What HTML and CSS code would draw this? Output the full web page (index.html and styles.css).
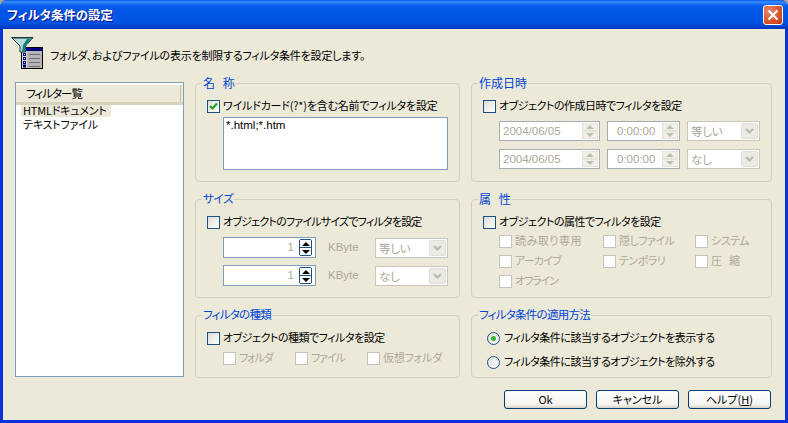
FILE: index.html
```html
<!DOCTYPE html>
<html lang="ja">
<head>
<meta charset="utf-8">
<title>フィルタ条件の設定</title>
<link rel="stylesheet" href="styles.css">
</head>
<body>
<div class="window">
  <header class="titlebar">
    <span class="title">フィルタ条件の設定</span>
    <button class="close" aria-label="閉じる"><svg width="12" height="12" viewBox="0 0 12 12"><path d="M1.500 1.500l9 9M10.500 1.500l-9 9" stroke="#fff" stroke-width="2.200" fill="none"/></svg></button>
  </header>
  <div class="client">
    <div class="intro">
      <svg class="intro-icon" width="33" height="34" viewBox="0 0 33 34">
        <rect x="10.500" y="11.500" width="21" height="21" fill="#b5b5b5" stroke="#000"/>
        <rect x="11" y="12" width="20" height="3" fill="#000080"/>
        <rect x="11" y="15" width="5" height="17" fill="#d8d8d8"/>
        <g fill="#fff" stroke="#000080"><rect x="12.500" y="17.500" width="2" height="2"/><rect x="12.500" y="21.500" width="2" height="2"/><rect x="12.500" y="25.500" width="2" height="2"/><rect x="12.500" y="29" width="2" height="2"/></g>
        <g stroke="#6e6e6e"><path d="M18 18.500h11M18 22.500h11M18 26.500h11M18 30.500h11"/></g>
        <path d="M0.500 1.500L22 1.500L14.500 10L14.500 16L9 16L9 10Z" fill="#b6dcdc" stroke="#20403f"/>
        <path d="M1 1h21v1.500H1z" fill="#1a3a3a"/>
        <path d="M12 9L16 3L20 3L14.500 10L14.500 16L11 16Z" fill="#0e8080"/>
      </svg>
      <span class="intro-text">フォルダ、およびファイルの表示を制限するフィルタ条件を設定します。</span>
    </div>
    <div class="panes">
      <aside class="list">
        <div class="list-head"><span class="list-head-cell">フィルター覧</span></div>
        <div class="list-row selected"><span>HTMLドキュメント</span></div>
        <div class="list-row"><span>テキストファイル</span></div>
      </aside>

      <section class="group">
        <h2 class="legend wide">名 称</h2>
        <label class="check on"><i class="box"><svg width="11" height="11" viewBox="0 0 11 11"><path d="M2 5l2.500 2.500L9 2.500" stroke="#21a121" stroke-width="2.200" fill="none"/></svg></i><span>ワイルドカード(?*)を含む名前でフィルタを設定</span></label>
        <div class="pattern">*.html;*.htm</div>
      </section>

      <section class="group">
        <h2 class="legend kanji">作成日時</h2>
        <label class="check"><i class="box"></i><span class="tight">オブジェクトの作成日時でフィルタを設定</span></label>
        <div class="date-row">
          <div class="field date">2004/06/05<span class="spin gray"><b class="up"></b><b class="down"></b></span></div>
          <div class="field time">0:00:00<span class="spin gray"><b class="up"></b><b class="down"></b></span></div>
          <div class="combo"><span>等しい</span><b class="drop"><svg width="9" height="6" viewBox="0 0 9 6"><path d="M1 1l3.500 3.500L8 1" stroke="#b8b8ac" stroke-width="2" fill="none"/></svg></b></div>
        </div>
        <div class="date-row">
          <div class="field date">2004/06/05<span class="spin gray"><b class="up"></b><b class="down"></b></span></div>
          <div class="field time">0:00:00<span class="spin gray"><b class="up"></b><b class="down"></b></span></div>
          <div class="combo"><span>なし</span><b class="drop"><svg width="9" height="6" viewBox="0 0 9 6"><path d="M1 1l3.500 3.500L8 1" stroke="#b8b8ac" stroke-width="2" fill="none"/></svg></b></div>
        </div>
      </section>

      <section class="group">
        <h2 class="legend">サイズ</h2>
        <label class="check"><i class="box"></i><span class="tighter">オブジェクトのファイルサイズでフィルタを設定</span></label>
        <div class="size-row">
          <div class="field size">1<span class="spin dark"><b class="up"></b><b class="down"></b></span></div>
          <span class="unit">KByte</span>
          <div class="combo"><span>等しい</span><b class="drop"><svg width="9" height="6" viewBox="0 0 9 6"><path d="M1 1l3.500 3.500L8 1" stroke="#b8b8ac" stroke-width="2" fill="none"/></svg></b></div>
        </div>
        <div class="size-row">
          <div class="field size">1<span class="spin dark"><b class="up"></b><b class="down"></b></span></div>
          <span class="unit">KByte</span>
          <div class="combo"><span>なし</span><b class="drop"><svg width="9" height="6" viewBox="0 0 9 6"><path d="M1 1l3.500 3.500L8 1" stroke="#b8b8ac" stroke-width="2" fill="none"/></svg></b></div>
        </div>
      </section>

      <section class="group">
        <h2 class="legend wide">属 性</h2>
        <label class="check"><i class="box"></i><span class="tight">オブジェクトの属性でフィルタを設定</span></label>
        <div class="attrs">
          <label class="check off"><i class="box"></i><span class="roomy">読み取り専用</span></label>
          <label class="check off"><i class="box"></i><span class="tight">隠しファイル</span></label>
          <label class="check off"><i class="box"></i><span class="tight">システム</span></label>
          <label class="check off"><i class="box"></i><span class="tighter">アーカイブ</span></label>
          <label class="check off"><i class="box"></i><span class="tight">テンポラリ</span></label>
          <label class="check off wide-text"><i class="box"></i><span>圧 縮</span></label>
          <label class="check off"><i class="box"></i><span class="tightest">オフライン</span></label>
        </div>
      </section>

      <section class="group">
        <h2 class="legend tighter">フィルタの種類</h2>
        <label class="check"><i class="box"></i><span class="tight">オブジェクトの種類でフィルタを設定</span></label>
        <div class="kinds">
          <label class="check off"><i class="box"></i><span class="tightest">フォルダ</span></label>
          <label class="check off"><i class="box"></i><span class="tightest">ファイル</span></label>
          <label class="check off"><i class="box"></i><span>仮想フォルダ</span></label>
        </div>
      </section>

      <section class="group">
        <h2 class="legend tighter">フィルタ条件の適用方法</h2>
        <label class="radio selected"><i class="dot"></i><span class="tight">フィルタ条件に該当するオブジェクトを表示する</span></label>
        <label class="radio"><i class="dot"></i><span class="tight">フィルタ条件に該当するオブジェクトを除外する</span></label>
      </section>
    </div>
    <div class="actions">
      <button class="btn">Ok</button>
      <button class="btn">キャンセル</button>
      <button class="btn">ヘルプ(<u>H</u>)</button>
    </div>
  </div>
</div>
</body>
</html>
```
FILE: styles.css
```css
* { box-sizing: border-box; }
html, body { margin: 0; padding: 0; background: #a8a89c; }
body {
  width: 788px; height: 423px; overflow: hidden;
  font-family: "Noto Sans CJK JP", "Liberation Sans", sans-serif;
  font-size: 11px; line-height: 13px; letter-spacing: -0.2px; color: #000;
  font-feature-settings: "palt";
}
.window {
  width: 788px; height: 423px; display: flex; flex-direction: column;
  border-radius: 7px 7px 0 0; overflow: hidden;
  background: #0831d9;
}
.titlebar {
  height: 29px; flex: none; display: flex; align-items: center; justify-content: space-between;
  padding: 1px 5px 0 7px;
  background: linear-gradient(#0a5ae6 0, #3b8cff 2px, #0e63ee 5px, #0058e6 9px, #0055e5 18px, #0054e3 23px, #0046d0 26px, #0033bb 29px);
}
.title { color: #fff; font-weight: 700; font-size: 12.4px; letter-spacing: 0; text-shadow: 1px 1px 0 #0f1089; }
.close {
  width: 20px; height: 20px; padding: 0; display: flex; align-items: center; justify-content: center;
  border: 1px solid #fff; border-radius: 3px;
  background: radial-gradient(circle at 30% 30%, #e88a6e, #d9502a 60%, #c23a14);
}
.client {
  flex: 1; margin: 0 3px 3px; background: #ece9d8; display: flex; flex-direction: column;
}
.intro { height: 54px; flex: none; display: flex; align-items: flex-start; padding: 7px 0 0 8px; }
.intro-icon { flex: none; }
.intro-text { margin: 13px 0 0 6px; }
.panes {
  display: grid; grid-template-columns: 169px 265px 301px; grid-template-rows: 99px 99px 63px;
  column-gap: 11px; row-gap: 17px; padding-left: 12px;
}
.list {
  grid-row: 1 / 4; margin: -1px 0 1px; background: #fff; border: 1px solid #7f9db9; padding: 2px 0 0;
}
.list-head {
  height: 20px; background: #ece9d8; border-bottom: 3px solid #d6d2bd; padding-right: 2px;
}
.list-head-cell {
  display: block; height: 17px; padding: 2px 0 0 10px; border-right: 1px solid #c4c1ae; font-size: 11.5px; letter-spacing: -1px;
}
.list-row { height: 14px; line-height: 11px; padding-left: 5px; white-space: nowrap; }
.list-row span { display: block; padding: 0 2px; width: 90px; height: 12px; }
.list-row.selected span { background: #ece9d8; }
.group { position: relative; border: 1px solid #d0d0bf; border-radius: 4px; padding: 16px 11px 0; }
.legend {
  position: absolute; top: -8px; left: 6px; margin: 0; padding: 0 1px; white-space: nowrap;
  background: #ece9d8; color: #0046d5; font: inherit; font-size: 11.5px; letter-spacing: -0.3px; font-weight: 400;
}
.legend.kanji { font-size: 12px; letter-spacing: 0; }
.legend.wide { font-size: 12px; letter-spacing: 0; word-spacing: 5px; }
.legend.tighter { letter-spacing: -0.75px; }
.check, .radio { display: flex; align-items: flex-start; height: 14px; white-space: nowrap; }
.check > span, .radio > span { margin-top: -1px; }
.check > .roomy { letter-spacing: 0.5px; }
.check > .tight, .radio > .tight { letter-spacing: -0.5px; }
.check > .tighter { letter-spacing: -0.8px; }
.check > .tightest { letter-spacing: -1.1px; }
.box {
  flex: none; width: 13px; height: 13px; margin-right: 3px; border: 1px solid #1c5180;
  background: linear-gradient(135deg, #dcdcd7, #fff); display: flex; align-items: center; justify-content: center;
}
.check.off { color: #aca899; }
.check.off .box { border-color: #c5c4bb; background: #fff; }
.wide-text { word-spacing: 5px; }
.pattern {
  width: 225px; height: 53px; margin: 3px 0 0 16px; padding: 1px 2px; background: #fff; border: 1px solid #7f9db9;
  font-family: "Liberation Sans", sans-serif; font-size: 11.5px; letter-spacing: 0;
}
.date-row, .size-row { display: flex; }
.date-row { margin: 7px 0 0 16px; gap: 7px; }
.date-row + .date-row { margin-top: 8px; }
.size-row { margin: 7px 0 0 16px; align-items: center; height: 21px; }
.size-row + .size-row { margin-top: 7px; }
.field {
  position: relative; height: 20px; background: #fff; border: 1px solid #a5acb2; color: #aca899;
  font-family: "Liberation Sans", sans-serif; font-size: 11.5px; letter-spacing: 0; line-height: 18px;
}
.field.date { width: 101px; padding-left: 3px; }
.field.time { width: 73px; padding-left: 9px; }
.field.size { width: 93px; height: 21px; border-color: #7f9db9; text-align: right; padding-right: 21px; line-height: 19px; }
.spin { position: absolute; top: 1px; right: 1px; bottom: 1px; width: 16px; display: flex; flex-direction: column; }
.spin b { flex: 1; display: flex; align-items: center; justify-content: center; }
.spin b::after { content: ""; border-left: 4px solid transparent; border-right: 4px solid transparent; }
.spin .up::after { border-bottom: 4px solid; }
.spin .down::after { border-top: 4px solid; }
.spin.gray b { background: #f1f0e8; border: 1px solid #e6e4d8; color: #bdbdb2; }
.spin.dark { width: 13px; right: 3px; border: 1px solid #1c5180; border-radius: 2px; }
.spin.dark b { background: #fff; color: #000; }
.spin.dark .up { border-bottom: 1px solid #1c5180; }
.combo {
  width: 73px; height: 20px; display: flex; border: 1px solid #c9c7ba; background: #fff; padding: 1px; color: #aca899; line-height: 16px; font-size: 11.5px;
}
.combo span { flex: 1; padding-left: 2px; }
.drop { width: 17px; background: #ecebe3; border: 1px solid #e0dfd5; border-radius: 2px; display: flex; align-items: center; justify-content: center; }
.unit { margin: 0 15px 0 12px; color: #aca899; font-family: "Liberation Sans", sans-serif; font-size: 11.5px; letter-spacing: 0; width: 32px; }
.attrs { display: grid; grid-template-columns: 104px 92px auto; row-gap: 6px; margin: 5px 0 0 16px; }
.kinds { display: grid; grid-template-columns: 72px 72px auto; margin: 6px 0 0 16px; }
.radio { margin-left: 4px; }
.radio + .radio { margin-top: 10px; }
.dot {
  flex: none; width: 13px; height: 13px; margin-right: 4px; border-radius: 50%; border: 1px solid #1c5180;
  background: linear-gradient(135deg, #dcdcd7, #fff); display: flex; align-items: center; justify-content: center;
}
.radio.selected .dot::after { content: ""; width: 5px; height: 5px; border-radius: 50%; background: #2fb52f; }
.actions { display: flex; justify-content: flex-end; gap: 9px; padding: 12px 14px 0 0; }
.btn {
  width: 83px; height: 19px; padding: 0; font: inherit; color: #000;
  border: 1px solid #003c74; border-radius: 3px;
  background: linear-gradient(#fff, #f4f3ee 80%, #d6d0c5);
}
```
